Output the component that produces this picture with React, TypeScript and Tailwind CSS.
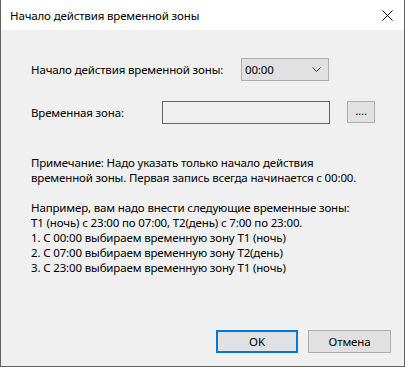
import React from "react";

const font = { fontFamily: '"Noto Sans", "Liberation Sans", sans-serif' };

const App = () => {
  return (
    <div
      className="w-[405px] h-[367px] flex flex-col border-l border-r border-b border-[#616161] text-[11.5px] tracking-[-0.15px] text-black bg-[#f0f0f0] overflow-hidden"
      style={font}
    >
      {/* title bar */}
      <div className="h-[30px] bg-white flex items-center justify-between pl-[9px] pr-[11px] shrink-0">
        <span className="leading-[15px]">Начало действия временной зоны</span>
        <svg width="11" height="11" viewBox="0 0 11 11">
          <path d="M0.5 0.5 L10.5 10.5 M10.5 0.5 L0.5 10.5" stroke="#000" strokeWidth="1" />
        </svg>
      </div>

      {/* body */}
      <div className="flex-1 flex flex-col pl-[30px] pt-[28px] pr-[13px] pb-[13px]">
        <div className="flex items-center h-[23px]">
          <span className="w-[210px] leading-[15px]">Начало действия временной зоны:</span>
          <div className="w-[88px] h-[23px] bg-[#e1e1e1] border border-[#adadad] flex items-center justify-between pl-[3px] pr-[7px]">
            <span>00:00</span>
            <svg width="9" height="5" viewBox="0 0 9 5">
              <path d="M0.5 0.5 L4.5 4.5 L8.5 0.5" fill="none" stroke="#333" strokeWidth="1" />
            </svg>
          </div>
        </div>

        <div className="flex items-start mt-[20px]">
          <span className="w-[131px] h-[23px] flex items-center leading-[15px]">Временная зона:</span>
          <div className="w-[168px] h-[23px] border border-[#646464] bg-[#f0f0f0]" />
          <button className="ml-[17px] w-[28px] h-[22px] bg-[#e1e1e1] border border-[#adadad] flex items-center justify-center leading-none pb-[2px]">
            ....
          </button>
        </div>

        <div className="mt-[31px] leading-[15px]">
          <p>Примечание: Надо указать только начало действия</p>
          <p>временной зоны. Первая запись всегда начинается с 00:00.</p>
          <p className="mt-[15px]">Например, вам надо внести следующие временные зоны:</p>
          <p>T1 (ночь) с 23:00 по 07:00, T2(день) с 7:00 по 23:00.</p>
          <p>1. С 00:00 выбираем временную зону T1 (ночь)</p>
          <p>2. С 07:00 выбираем временную зону T2(день)</p>
          <p>3. С 23:00 выбираем временную зону T1 (ночь)</p>
        </div>

        <div className="mt-auto flex justify-end gap-[10px]">
          <button className="w-[82px] h-[23px] bg-[#e1e1e1] border-2 border-[#0078d7] flex items-center justify-center">
            OK
          </button>
          <button className="w-[83px] h-[23px] bg-[#e1e1e1] border border-[#adadad] flex items-center justify-center">
            Отмена
          </button>
        </div>
      </div>
    </div>
  );
};

export default App;
